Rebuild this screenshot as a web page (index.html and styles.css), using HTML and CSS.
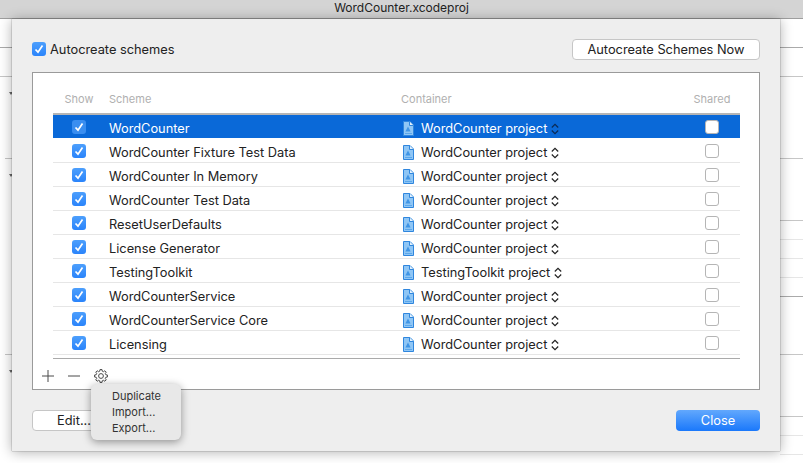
FILE: index.html
```html
<!DOCTYPE html>
<html lang="en">
<head>
  <meta charset="UTF-8">
  <title>WordCounter.xcodeproj</title>
  <link rel="stylesheet" href="styles.css">
</head>
<body>
  <svg width="0" height="0" class="defs">
    <symbol id="doc" viewBox="0 0 11 15">
      <path d="M.5.5h6.500l3.500 3.500v10.500H.5z" fill="#8fc6f5" stroke="#2f86de"/>
      <path d="M6.500.5v4h4" fill="#e4f1fc" stroke="#2f86de"/>
      <path d="M5 5.500l2.600 5H2.400z" fill="#3f95e6"/>
      <path d="M2 12h7v1H2z" fill="#5aa7ec"/>
    </symbol>
    <symbol id="stepper" viewBox="0 0 8 12">
      <path d="M.8 4.500L4 1.300l3.200 3.200M.8 7.500L4 10.700l3.200-3.200" fill="none" stroke="currentColor" stroke-width="1.200"/>
    </symbol>
    <symbol id="tick" viewBox="0 0 14 14">
      <path d="M3.500 7.500L6 10.200l4.500-6.700" fill="none" stroke="#fff" stroke-width="1.700"/>
    </symbol>
  </svg>

  <header class="titlebar">WordCounter.xcodeproj</header>

  <div class="backdrop">
    <div class="bg-row strong h29"></div>
    <div class="bg-row mid h29"></div>
    <div class="bg-row mid inset h82"><i class="arrow"></i></div>
    <div class="bg-row mid right h62"><i class="arrow"></i></div>
    <div class="bg-row light right h19"></div>
    <div class="bg-row light right h19"></div>
    <div class="bg-row light right h19"></div>
    <div class="bg-row strong right h19"></div>
    <div class="bg-row mid inset h58"></div>
    <div class="bg-row mid right h62"><i class="arrow"></i></div>
    <div class="bg-row light right h19"></div>
    <div class="bg-row light right h19"></div>
  </div>

  <section class="sheet">
    <div class="top-row">
      <label class="auto"><span class="check on"><svg><use href="#tick"/></svg></span>Autocreate schemes</label>
      <button class="btn now">Autocreate Schemes Now</button>
    </div>

    <div class="panel">
      <div class="row head">
        <span class="c-show">Show</span>
        <span class="c-name">Scheme</span>
        <span class="c-cont">Container</span>
        <span class="c-shared">Shared</span>
      </div>
      <div class="rows">
        <div class="row selected">
          <span class="c-show"><span class="check on"><svg><use href="#tick"/></svg></span></span>
          <span class="c-name">WordCounter</span>
          <span class="c-cont"><svg class="doc"><use href="#doc"/></svg>WordCounter project<svg class="stepper"><use href="#stepper"/></svg></span>
          <span class="c-shared"><span class="check"></span></span>
        </div>
        <div class="row">
          <span class="c-show"><span class="check on"><svg><use href="#tick"/></svg></span></span>
          <span class="c-name">WordCounter Fixture Test Data</span>
          <span class="c-cont"><svg class="doc"><use href="#doc"/></svg>WordCounter project<svg class="stepper"><use href="#stepper"/></svg></span>
          <span class="c-shared"><span class="check"></span></span>
        </div>
        <div class="row">
          <span class="c-show"><span class="check on"><svg><use href="#tick"/></svg></span></span>
          <span class="c-name">WordCounter In Memory</span>
          <span class="c-cont"><svg class="doc"><use href="#doc"/></svg>WordCounter project<svg class="stepper"><use href="#stepper"/></svg></span>
          <span class="c-shared"><span class="check"></span></span>
        </div>
        <div class="row">
          <span class="c-show"><span class="check on"><svg><use href="#tick"/></svg></span></span>
          <span class="c-name">WordCounter Test Data</span>
          <span class="c-cont"><svg class="doc"><use href="#doc"/></svg>WordCounter project<svg class="stepper"><use href="#stepper"/></svg></span>
          <span class="c-shared"><span class="check"></span></span>
        </div>
        <div class="row">
          <span class="c-show"><span class="check on"><svg><use href="#tick"/></svg></span></span>
          <span class="c-name">ResetUserDefaults</span>
          <span class="c-cont"><svg class="doc"><use href="#doc"/></svg>WordCounter project<svg class="stepper"><use href="#stepper"/></svg></span>
          <span class="c-shared"><span class="check"></span></span>
        </div>
        <div class="row">
          <span class="c-show"><span class="check on"><svg><use href="#tick"/></svg></span></span>
          <span class="c-name">License Generator</span>
          <span class="c-cont"><svg class="doc"><use href="#doc"/></svg>WordCounter project<svg class="stepper"><use href="#stepper"/></svg></span>
          <span class="c-shared"><span class="check"></span></span>
        </div>
        <div class="row">
          <span class="c-show"><span class="check on"><svg><use href="#tick"/></svg></span></span>
          <span class="c-name">TestingToolkit</span>
          <span class="c-cont"><svg class="doc"><use href="#doc"/></svg>TestingToolkit project<svg class="stepper"><use href="#stepper"/></svg></span>
          <span class="c-shared"><span class="check"></span></span>
        </div>
        <div class="row">
          <span class="c-show"><span class="check on"><svg><use href="#tick"/></svg></span></span>
          <span class="c-name">WordCounterService</span>
          <span class="c-cont"><svg class="doc"><use href="#doc"/></svg>WordCounter project<svg class="stepper"><use href="#stepper"/></svg></span>
          <span class="c-shared"><span class="check"></span></span>
        </div>
        <div class="row">
          <span class="c-show"><span class="check on"><svg><use href="#tick"/></svg></span></span>
          <span class="c-name">WordCounterService Core</span>
          <span class="c-cont"><svg class="doc"><use href="#doc"/></svg>WordCounter project<svg class="stepper"><use href="#stepper"/></svg></span>
          <span class="c-shared"><span class="check"></span></span>
        </div>
        <div class="row">
          <span class="c-show"><span class="check on"><svg><use href="#tick"/></svg></span></span>
          <span class="c-name">Licensing</span>
          <span class="c-cont"><svg class="doc"><use href="#doc"/></svg>WordCounter project<svg class="stepper"><use href="#stepper"/></svg></span>
          <span class="c-shared"><span class="check"></span></span>
        </div>
      </div>
      <div class="tools">
        <svg width="12" height="12" viewBox="0 0 12 12"><path d="M6 0v12M0 6h12" stroke="#4a4a4a" fill="none"/></svg>
        <svg width="12" height="12" viewBox="0 0 12 12"><path d="M0 6h12" stroke="#4a4a4a" fill="none"/></svg>
        <svg width="14" height="14" viewBox="0 0 14 14"><path d="M5.790 2.150L5.980.58h2.040l.19 1.570 1.370.56 1.240-.97 1.440 1.440-.97 1.240.56 1.370 1.570.19v2.040l-1.570.19-.56 1.370.97 1.240-1.440 1.440-1.240-.97-1.370.56-.19 1.570H5.980l-.19-1.570-1.370-.56-1.240.97-1.440-1.440.97-1.240-.56-1.370-1.570-.19V5.980l1.570-.19.56-1.370-.97-1.240 1.440-1.440 1.240.97z" fill="none" stroke="#4a4a4a" stroke-linejoin="round"/><circle cx="7" cy="7" r="2.400" fill="none" stroke="#4a4a4a"/></svg>
      </div>
    </div>

    <div class="bottom-row">
      <button class="btn edit">Edit...</button>
      <button class="btn close">Close</button>
    </div>

    <ul class="menu">
      <li>Duplicate</li>
      <li>Import...</li>
      <li>Export...</li>
    </ul>
  </section>
</body>
</html>
```

FILE: styles.css
```css
html, body {
  margin: 0;
}

body {
  background: #fff;
  color: #222;
  font-family: "Inter", "Liberation Sans", sans-serif;
  font-size: 12.800px;
  height: 463px;
  overflow: hidden;
  position: relative;
}

.defs {
  position: absolute;
}

.titlebar {
  background: #d4d4d4;
  border-bottom: 1px solid #9e9e9e;
  box-sizing: border-box;
  font-size: 12px;
  height: 19px;
  line-height: 15px;
  text-align: center;
}

/* window behind the sheet: only its edges show */
.bg-row {
  box-sizing: border-box;
  display: flex;
  flex-direction: column;
}

.bg-row::after {
  background: var(--line);
  content: "";
  height: 1px;
  margin-top: auto;
}

.bg-row.strong { --line: #aaa; }
.bg-row.mid { --line: #c6c6c6; }
.bg-row.light { --line: #e6e6e6; }
.bg-row.inset::after { margin-left: 5px; }
.bg-row.right::after { margin-left: 780px; }

.h19 { height: 19px; }
.h29 { height: 29px; }
.h58 { height: 58px; }
.h62 { height: 62px; }
.h82 { height: 82px; }

.arrow {
  border-left: 2px solid transparent;
  border-right: 2px solid transparent;
  border-top: 3px solid #666;
  height: 0;
  margin: 15px 0 0 9px;
  width: 0;
}

.sheet {
  background: #eee;
  box-shadow: 0 0 1px rgba(0, 0, 0, .6), 0 1px 12px rgba(0, 0, 0, .32);
  box-sizing: border-box;
  display: flex;
  flex-direction: column;
  height: 432px;
  left: 12px;
  padding: 20px 20px 0;
  position: absolute;
  top: 19px;
  width: 768px;
}

.top-row {
  align-items: center;
  display: flex;
  height: 20px;
  justify-content: space-between;
}

.auto {
  align-items: center;
  display: flex;
  gap: 4px;
}

.check {
  background: #fff;
  border: 1px solid #b5b5b5;
  border-radius: 3px;
  box-sizing: border-box;
  display: inline-block;
  height: 14px;
  width: 14px;
}

.check.on {
  background: linear-gradient(#4d9ffc, #2a84fb);
  border: 0;
}

.check svg {
  display: block;
  height: 14px;
  width: 14px;
}

.btn {
  background: #fff;
  border: 1px solid #c6c6c6;
  border-radius: 4px;
  box-sizing: border-box;
  color: #222;
  font: inherit;
  height: 21px;
  padding: 0;
}

.now {
  width: 188px;
}

.panel {
  background: #fff;
  border: 1px solid #9a9a9a;
  box-sizing: border-box;
  display: flex;
  flex-direction: column;
  height: 318px;
  margin-top: 13px;
  padding: 0 19px 0 20px;
}

.row {
  align-items: center;
  border-bottom: 1px solid #e6e6e6;
  box-sizing: border-box;
  display: flex;
  height: 24px;
}

.head {
  border-bottom: 2px solid #b5b5b5;
  color: #b0b0b0;
  font-size: 11px;
  height: 42px;
  padding-top: 12px;
}

.c-show {
  display: flex;
  justify-content: center;
  width: 52px;
}

.c-name {
  flex: none;
  padding-left: 4px;
  width: 292px;
}

.c-cont {
  align-items: center;
  display: flex;
  flex: none;
  width: 283px;
}

.rows .c-name,
.rows .c-cont {
  padding-top: 4px;
}

.c-shared {
  display: flex;
  flex: 1;
  justify-content: center;
}

.doc {
  flex: none;
  height: 15px;
  margin: 0 7px 0 2px;
  width: 11px;
}

.stepper {
  flex: none;
  height: 12px;
  margin-left: 4px;
  width: 8px;
}

.row.selected {
  background: #0a69d8;
  border-bottom-color: #fff;
  color: #fff;
}

.selected .stepper {
  color: #0b2a55;
}

.selected .check.on {
  background: #3a8ef0;
}

.rows {
  border-bottom: 1px solid #aaa;
  padding-bottom: 3px;
}

.tools {
  align-items: center;
  display: flex;
  gap: 14px;
  margin-left: -11px;
  margin-top: 10px;
}

.bottom-row {
  align-items: center;
  display: flex;
  justify-content: space-between;
  margin-top: 20px;
}

.edit {
  width: 84px;
}

.close {
  background: linear-gradient(#62a8fd, #1a78fb);
  border: 0;
  color: #fff;
  width: 84px;
}

.menu {
  background: #e8e8e8;
  border-radius: 6px;
  box-shadow: 0 2px 8px rgba(0, 0, 0, .4);
  color: #333;
  font-size: 11px;
  left: 79px;
  line-height: 16px;
  list-style: none;
  margin: 0;
  padding: 4px 0 4px 21px;
  position: absolute;
  top: 365px;
  width: 69px;
}
```
